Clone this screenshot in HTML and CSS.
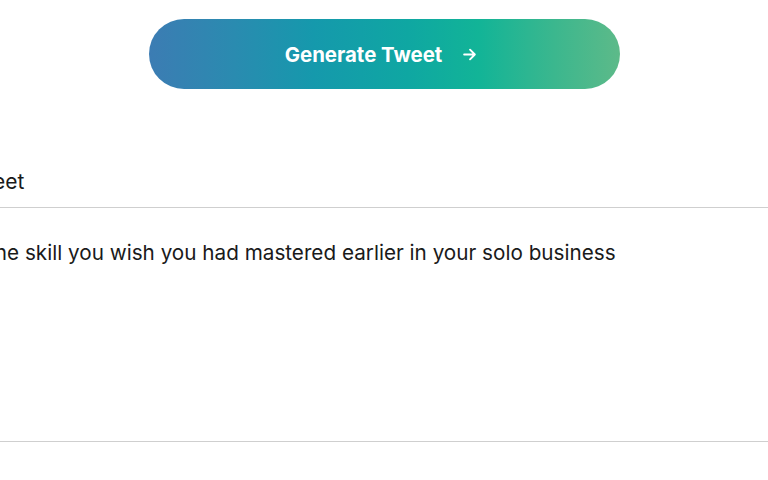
FILE: index.html
```html
<!DOCTYPE html>
<html>
<head>
<meta charset="utf-8">
<link rel="stylesheet" href="styles.css">
</head>
<body>
<div class="page">
  <div class="actions">
    <button class="generate">
      <span class="label">Generate Tweet</span>
      <svg class="arrow" width="14" height="14" viewBox="0 0 14 14" fill="none" stroke="#fff" stroke-width="1.8" stroke-linecap="round" stroke-linejoin="round"><path d="M2 7h10M7.5 2.5 12 7l-4.5 4.5"/></svg>
    </button>
  </div>
  <section class="field">
    <div class="field-title">Tweet</div>
    <div class="field-body">One skill you wish you had mastered earlier in your solo business</div>
  </section>
</div>
</body>
</html>
```
FILE: styles.css
```css
html, body {
  margin: 0;
  padding: 0;
  background: #ffffff;
  overflow: hidden;
}
body {
  width: 768px;
  height: 480px;
  font-family: Inter, "Noto Sans", sans-serif;
  color: #1a1a1a;
}
.page {
  display: flex;
  flex-direction: column;
  padding-top: 19px;
}
.actions {
  display: flex;
  justify-content: center;
  padding-left: 1px;
}
.generate {
  width: 471px;
  height: 70px;
  border: none;
  border-radius: 35px;
  background: linear-gradient(90deg, #3c7cb3 0%, #2a8bb0 18%, #1599ac 35%, #0fa7a2 55%, #12b497 70%, #3bb78e 86%, #5dba89 100%);
  display: flex;
  align-items: center;
  justify-content: center;
  gap: 20px;
  color: #ffffff;
  font-family: Inter, "Noto Sans", sans-serif;
  font-size: 20.4px;
  font-weight: 700;
  padding: 0 7px 0 0;
}
.arrow {
  width: 15px;
  height: 15px;
}
.field {
  margin-left: -21px;
  margin-top: 81px;
  display: flex;
  flex-direction: column;
}
.field-title {
  font-size: 21px;
  line-height: 24px;
  margin-left: -15px;
  padding-bottom: 13px;
}
.field-body {
  border-top: 1.5px solid #cfcfcf;
  border-bottom: 1.5px solid #cfcfcf;
  height: 235px;
  box-sizing: border-box;
  padding-top: 33px;
  font-size: 20.7px;
  line-height: 24px;
  width: 820px;
}
```
